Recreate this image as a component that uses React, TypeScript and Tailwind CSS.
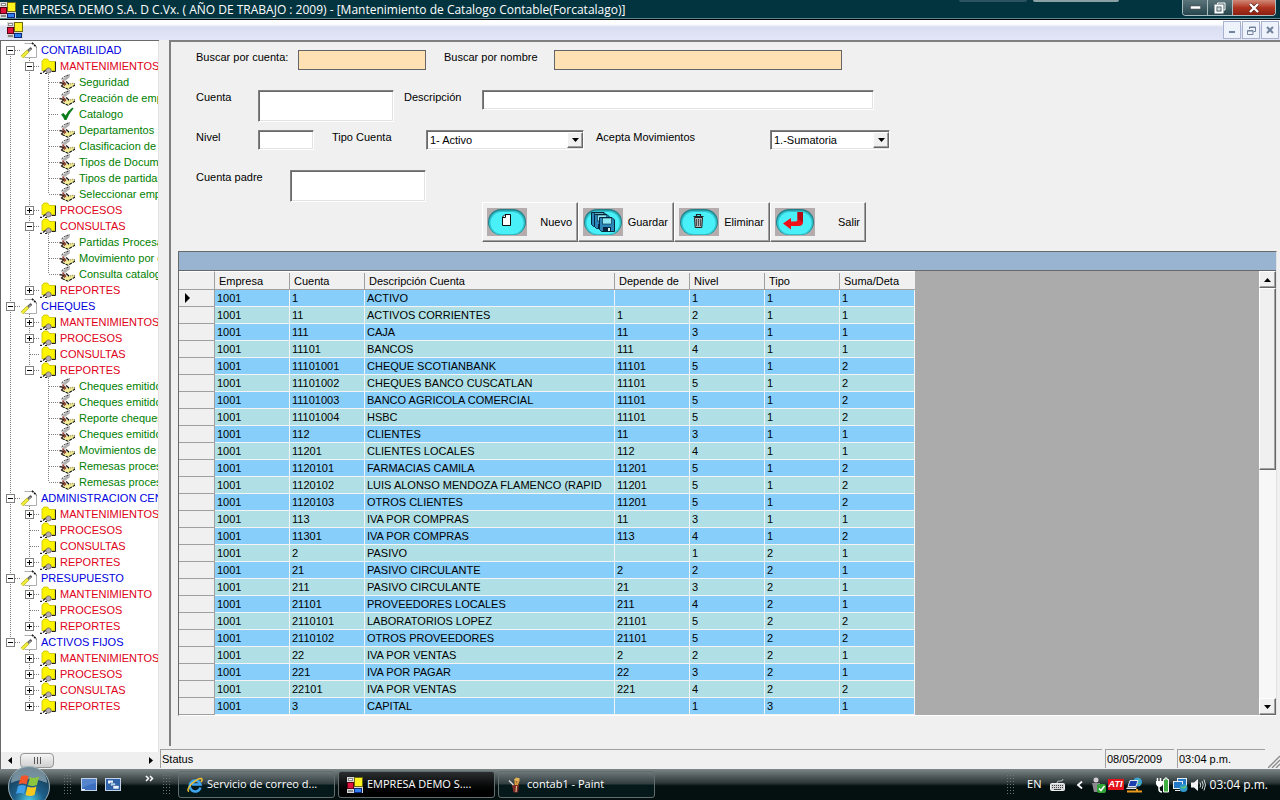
import { useState } from "react";
import type { ReactNode } from "react";

type TreeNode = {
  label: string;
  icon?: "note" | "folder" | "book" | "check";
  expandable?: boolean;
  children?: TreeNode[];
};

const book = (label: string): TreeNode => ({ label, icon: "book" });
const folder = (label: string, expandable = true, children?: TreeNode[]): TreeNode => ({
  label,
  icon: "folder",
  expandable,
  children,
});

const TREE: TreeNode[] = [
  {
    label: "CONTABILIDAD",
    icon: "note",
    expandable: true,
    children: [
      folder("MANTENIMIENTOS", true, [
        book("Seguridad"),
        book("Creación de emp"),
        { label: "Catalogo", icon: "check" },
        book("Departamentos"),
        book("Clasificacion de p"),
        book("Tipos de Docum"),
        book("Tipos de partidas"),
        book("Seleccionar emp"),
      ]),
      folder("PROCESOS"),
      folder("CONSULTAS", true, [
        book("Partidas Procesa"),
        book("Movimiento por c"),
        book("Consulta catalog"),
      ]),
      folder("REPORTES"),
    ],
  },
  {
    label: "CHEQUES",
    icon: "note",
    expandable: true,
    children: [
      folder("MANTENIMIENTOS"),
      folder("PROCESOS"),
      folder("CONSULTAS", false),
      folder("REPORTES", true, [
        book("Cheques emitido"),
        book("Cheques emitido"),
        book("Reporte cheques"),
        book("Cheques emitido"),
        book("Movimientos de l"),
        book("Remesas proces"),
        book("Remesas proces"),
      ]),
    ],
  },
  {
    label: "ADMINISTRACION CEN",
    icon: "note",
    expandable: true,
    children: [
      folder("MANTENIMIENTOS"),
      folder("PROCESOS", false),
      folder("CONSULTAS", false),
      folder("REPORTES"),
    ],
  },
  {
    label: "PRESUPUESTO",
    icon: "note",
    expandable: true,
    children: [folder("MANTENIMIENTO"), folder("PROCESOS", false), folder("REPORTES")],
  },
  {
    label: "ACTIVOS FIJOS",
    icon: "note",
    expandable: true,
    children: [folder("MANTENIMIENTOS"), folder("PROCESOS"), folder("CONSULTAS"), folder("REPORTES")],
  },
];

const COLUMNS = ["Empresa", "Cuenta", "Descripción Cuenta", "Depende de", "Nivel", "Tipo", "Suma/Deta"];

const ROWS: string[][] = [
  ["1001", "1", "ACTIVO", "", "1", "1", "1"],
  ["1001", "11", "ACTIVOS CORRIENTES", "1", "2", "1", "1"],
  ["1001", "111", "CAJA", "11", "3", "1", "1"],
  ["1001", "11101", "BANCOS", "111", "4", "1", "1"],
  ["1001", "11101001", "CHEQUE SCOTIANBANK", "11101", "5", "1", "2"],
  ["1001", "11101002", "CHEQUES BANCO CUSCATLAN", "11101", "5", "1", "2"],
  ["1001", "11101003", "BANCO AGRICOLA COMERCIAL", "11101", "5", "1", "2"],
  ["1001", "11101004", "HSBC", "11101", "5", "1", "2"],
  ["1001", "112", "CLIENTES", "11", "3", "1", "1"],
  ["1001", "11201", "CLIENTES LOCALES", "112", "4", "1", "1"],
  ["1001", "1120101", "FARMACIAS CAMILA", "11201", "5", "1", "2"],
  ["1001", "1120102", "LUIS ALONSO MENDOZA FLAMENCO (RAPID", "11201", "5", "1", "2"],
  ["1001", "1120103", "OTROS CLIENTES", "11201", "5", "1", "2"],
  ["1001", "113", "IVA POR COMPRAS", "11", "3", "1", "1"],
  ["1001", "11301", "IVA POR COMPRAS", "113", "4", "1", "2"],
  ["1001", "2", "PASIVO", "", "1", "2", "1"],
  ["1001", "21", "PASIVO CIRCULANTE", "2", "2", "2", "1"],
  ["1001", "211", "PASIVO CIRCULANTE", "21", "3", "2", "1"],
  ["1001", "21101", "PROVEEDORES LOCALES", "211", "4", "2", "1"],
  ["1001", "2110101", "LABORATORIOS LOPEZ", "21101", "5", "2", "2"],
  ["1001", "2110102", "OTROS PROVEEDORES", "21101", "5", "2", "2"],
  ["1001", "22", "IVA POR VENTAS", "2", "2", "2", "1"],
  ["1001", "221", "IVA POR PAGAR", "22", "3", "2", "1"],
  ["1001", "22101", "IVA POR VENTAS", "221", "4", "2", "2"],
  ["1001", "3", "CAPITAL", "", "1", "3", "1"],
];

const raised =
  "bg-[#f0f0f0] border border-t-white border-l-white border-r-[#696969] border-b-[#696969] shadow-[inset_-1px_-1px_0_#a0a0a0]";
const sunken =
  "bg-white border border-t-[#808080] border-l-[#808080] border-r-white border-b-white shadow-[inset_1px_1px_0_#696969,inset_-1px_-1px_0_#e3e3e3] outline-none";

function FormsIcon() {
  return (
    <svg width="16" height="16" viewBox="0 0 16 16" shapeRendering="crispEdges" className="shrink-0">
      <rect width="16" height="16" fill="#d8d8d8" />
      <rect x="1" y="1" width="5" height="3" fill="#8a8a8a" />
      <rect x="2" y="2" width="3" height="1" fill="#fff" />
      <rect x="0" y="5" width="7" height="7" fill="#5a0014" />
      <rect x="1" y="6" width="5" height="5" fill="#e0123c" />
      <rect x="7" y="0" width="9" height="10" fill="#6e6a10" />
      <rect x="8" y="1" width="7" height="8" fill="#fff21e" />
      <rect x="7" y="11" width="8" height="5" fill="#0a2a7a" />
      <rect x="8" y="12" width="6" height="3" fill="#2f7df0" />
      <rect x="1" y="13" width="5" height="2" fill="#8a8a8a" />
    </svg>
  );
}

function NodeIcon({ icon }: { icon: TreeNode["icon"] }) {
  if (icon === "note") {
    return (
      <svg width="16" height="16" viewBox="0 0 16 16" className="shrink-0">
        <path d="M3.5 1.5H12L15.5 5V15.5H3.5" fill="#fff" stroke="#b0b0b0" />
        <path d="M11 .8L15.5 5.2" stroke="#111" strokeWidth="1.6" strokeDasharray="2 1" />
        <path d="M1 15L7 9" stroke="#b8b020" strokeWidth="3.4" />
        <path d="M1 15L7 9" stroke="#f4f03a" strokeWidth="2.2" />
        <path d="M7 9L10.5 6" stroke="#555" strokeWidth="2.4" />
        <path d="M8 8.6L9.6 7" stroke="#d8d8d8" strokeWidth="1" />
      </svg>
    );
  }
  if (icon === "folder") {
    return (
      <svg width="16" height="16" viewBox="0 0 16 16" className="shrink-0">
        <path d="M2 12.5V3L4 1H7.500L9.500 3.500H15V12.500Z" fill="#fdf500" stroke="#c8bc00" strokeWidth=".8" />
        <path d="M15.500 3.500V13.500H11.500" fill="none" stroke="#222" />
        <path d="M0 15.500H2M3 14.500L6 12" stroke="#222" strokeWidth="1.400" />
        <circle cx="8.500" cy="12.500" r="2.600" fill="#b9aeb2" stroke="#6c6668" strokeWidth=".8" />
        <path d="M5 15.500H7" stroke="#222" />
      </svg>
    );
  }
  if (icon === "check") {
    return (
      <svg width="16" height="16" viewBox="0 0 16 16" className="shrink-0">
        <path d="M2 8.5L4.5 7L6.5 9.5Q9 4.5 13.5 1.5L14.5 2.5Q10 7.5 7.5 14H5.5Q4 10.5 2 8.5Z" fill="#0b7d1d" />
      </svg>
    );
  }
  return (
    <svg width="16" height="16" viewBox="0 0 16 16" className="shrink-0">
      <path d="M5 9.500L9 10L15 9L15.500 11.500L9 15L3.500 12.500Z" fill="#f0eb94" />
      <path d="M3 12.500L9 15.200L15.500 11.500V9" fill="none" stroke="#111" strokeWidth="1.100" strokeDasharray="3 1" />
      <path d="M9 10.500L15 9" stroke="#8a8440" strokeDasharray="1 1" />
      <path d="M3 5.500L8 1.500L11 .5L10.500 3.500L6 7Z" fill="#b2b2b2" />
      <path d="M2.500 5L5.500 2.500L10.500 .5" fill="none" stroke="#222" strokeDasharray="2 1" />
      <path d="M.500 8.500L5 9.500L2 12.500" fill="none" stroke="#3a2420" strokeWidth="1.300" />
      <path d="M3.500 6.500L6.500 10L5 11.500" fill="none" stroke="#8a3c30" strokeWidth="1.500" />
      <path d="M7 7.500L10 10" stroke="#111" strokeWidth="1.200" />
    </svg>
  );
}

// One 19px step of the dotted tree lines
function Guide({ top, bottom, right }: { top?: boolean; bottom?: boolean; right?: boolean }) {
  return (
    <svg width="19" height="16" viewBox="0 0 19 16" shapeRendering="crispEdges" className="block shrink-0">
      <g stroke="#808080" strokeDasharray="1 1">
        {top && <path d="M9.5 0V8" />}
        {bottom && <path d="M9.5 8V16" />}
        {right && <path d="M10 8.5H19" />}
      </g>
    </svg>
  );
}

type BranchProps = {
  node: TreeNode;
  level: number;
  trail: boolean[];
  first: boolean;
  last: boolean;
};

const LABEL_COLORS = ["text-[#0000e0]", "text-[#e00018]", "text-[#008000]"];

function Branch({ node, level, trail, first, last }: BranchProps) {
  const [open, setOpen] = useState(!!node.children);

  return (
    <li>
      <div className="flex h-4 items-center whitespace-nowrap">
        {trail.map((line, i) => (
          <Guide key={i} top={line} bottom={line} />
        ))}
        <div className="relative shrink-0">
          <Guide top={!(level === 0 && first)} bottom={!last} right />
          {node.expandable && (
            <button
              type="button"
              aria-label={node.label}
              aria-expanded={open}
              onClick={() => setOpen(!open)}
              className="absolute top-1 left-[5px] block"
            >
              <svg width="9" height="9" viewBox="0 0 9 9" shapeRendering="crispEdges" className="block">
                <rect x=".5" y=".5" width="8" height="8" fill="#fff" stroke="#808080" />
                <path d="M2 4.5H7" stroke="#000" />
                {!(open && node.children) && <path d="M4.5 2V7" stroke="#000" />}
              </svg>
            </button>
          )}
        </div>
        <span className="ml-px flex items-center gap-1">
          <NodeIcon icon={node.icon} />
          <span className={LABEL_COLORS[level]}>{node.label}</span>
        </span>
      </div>
      {open && node.children && (
        <ul>
          {node.children.map((child, i) => (
            <Branch
              key={i}
              node={child}
              level={level + 1}
              trail={[...trail, !last]}
              first={i === 0}
              last={i === node.children!.length - 1}
            />
          ))}
        </ul>
      )}
    </li>
  );
}

function Arrow({ dir }: { dir: "up" | "down" | "left" | "right" }) {
  const paths = { up: "M0 6H7L3.5 2Z", down: "M0 2H7L3.5 6Z", left: "M5 0V7L1 3.5Z", right: "M2 0V7L6 3.5Z" };
  return (
    <svg width="7" height="8" viewBox="0 0 7 8">
      <path d={paths[dir]} fill="#000" />
    </svg>
  );
}

function Sidebar() {
  return (
    <aside className="flex w-[159px] shrink-0 flex-col border-t border-l border-[#696969] bg-white">
      <ul className="flex-1 overflow-hidden border-r border-[#e3e3e3] pt-px">
        {TREE.map((node, i) => (
          <Branch key={i} node={node} level={0} trail={[]} first={i === 0} last={i === TREE.length - 1} />
        ))}
      </ul>
      <div className="flex h-[17px] shrink-0 items-center bg-[#efefef]">
        <button type="button" aria-label="Izquierda" className="flex w-[19px] justify-center">
          <Arrow dir="left" />
        </button>
        <div className="flex h-[15px] w-[34px] items-center justify-center gap-[2px] rounded-sm border border-[#979797] bg-linear-to-b from-[#f5f5f5] to-[#cfcfcf]">
          <span className="h-[7px] w-px bg-[#555]" />
          <span className="h-[7px] w-px bg-[#555]" />
          <span className="h-[7px] w-px bg-[#555]" />
        </div>
        <button type="button" aria-label="Derecha" className="ml-auto flex w-[17px] justify-center">
          <Arrow dir="right" />
        </button>
      </div>
    </aside>
  );
}

function Select({ id, value, width }: { id: string; value: string; width: string }) {
  return (
    <div className={`relative h-5 ${width}`}>
      <select id={id} defaultValue={value} className={`h-5 w-full appearance-none pl-[3px] ${sunken}`}>
        <option>{value}</option>
      </select>
      <span className={`pointer-events-none absolute top-[2px] right-px flex h-4 w-4 items-center justify-center ${raised}`}>
        <Arrow dir="down" />
      </span>
    </div>
  );
}

function OvalIcon({ children }: { children: ReactNode }) {
  return (
    <svg width="40" height="28" viewBox="0 0 40 28" className="shrink-0">
      <rect width="40" height="28" fill="#b5adad" />
      <rect x="1" y="1" width="38" height="26" rx="13" fill="#22808a" />
      <rect x="2" y="2.500" width="36" height="24.500" rx="12" fill="#2fc0ca" />
      <rect x="3.500" y="4" width="33" height="22" rx="11" fill="#4af0f8" />
      {children}
    </svg>
  );
}

function Floppy({ x, y }: { x: number; y: number }) {
  return (
    <g transform={`translate(${x} ${y})`}>
      <path d="M.5 .5H13L15.5 3V14.5H2.5L.5 12.5Z" fill="#2c87b8" stroke="#06263f" />
      <rect x="3.5" y="1" width="9" height="6" fill="#8fe9f2" stroke="#06263f" strokeWidth=".6" />
      <rect x="4" y="10" width="8" height="4.5" fill="#06263f" />
      <rect x="9" y="11" width="2" height="3" fill="#d8f6fa" />
    </g>
  );
}

function ToolButton({ label, children }: { label: string; children: ReactNode }) {
  return (
    <button type="button" className={`flex h-10 w-24 items-center justify-between pr-[5px] pl-1 ${raised}`}>
      <OvalIcon>{children}</OvalIcon>
      {label}
    </button>
  );
}

function CatalogForm() {
  return (
    <form className="pt-2 pl-[25px] leading-[14px]" onSubmit={(e) => e.preventDefault()}>
      <div className="flex h-10 items-start">
        <label htmlFor="buscar-cuenta" className="w-[102px]">Buscar por cuenta:</label>
        <input id="buscar-cuenta" className="h-5 w-32 border border-[#646464] bg-[#ffe1b3] px-1 outline-none" />
        <label htmlFor="buscar-nombre" className="ml-[18px] w-[110px]">Buscar por nombre</label>
        <input id="buscar-nombre" className="h-5 w-72 border border-[#646464] bg-[#ffe1b3] px-1 outline-none" />
      </div>
      <div className="flex h-10 items-start">
        <label htmlFor="cuenta" className="w-[62px]">Cuenta</label>
        <textarea id="cuenta" className={`h-8 w-[136px] resize-none px-1 ${sunken}`} />
        <label htmlFor="descripcion" className="ml-[10px] w-[78px]">Descripción</label>
        <input id="descripcion" className={`h-5 w-[392px] px-1 ${sunken}`} />
      </div>
      <div className="flex h-10 items-start">
        <label htmlFor="nivel" className="w-[62px]">Nivel</label>
        <input id="nivel" className={`h-5 w-14 px-1 ${sunken}`} />
        <label htmlFor="tipo" className="ml-[18px] w-[94px]">Tipo Cuenta</label>
        <Select id="tipo" value="1- Activo" width="w-[158px]" />
        <label htmlFor="movimientos" className="ml-3 w-[174px]">Acepta Movimientos</label>
        <Select id="movimientos" value="1.-Sumatoria" width="w-[120px]" />
      </div>
      <div className="flex h-8 items-start">
        <label htmlFor="padre" className="w-[94px]">Cuenta padre</label>
        <textarea id="padre" className={`h-8 w-[136px] resize-none px-1 ${sunken}`} />
      </div>
      <div className="flex pl-[286px]">
        <ToolButton label="Nuevo">
          <path d="M18 6.5H23.5V17.5H15.5V9Z" fill="#fff" stroke="#111" />
          <path d="M18.5 6.5V9.5H15.5" fill="none" stroke="#111" />
        </ToolButton>
        <ToolButton label="Guardar">
          <Floppy x={8} y={4} />
          <Floppy x={11} y={6} />
          <Floppy x={16} y={9} />
        </ToolButton>
        <ToolButton label="Eliminar">
          <path d="M14.500 8.500H24.500M17.500 8V6.500H21.500V8" fill="none" stroke="#222" strokeWidth="1.200" />
          <path d="M15.500 9.500H23.500L22.800 19.500H16.200Z" fill="#b4b4b8" stroke="#222" />
          <path d="M17.500 11V18M19.500 11V18M21.500 11V18" stroke="#333" strokeWidth=".8" />
        </ToolButton>
        <ToolButton label="Salir">
          <path d="M22.500 4H28V14Q28 18 23.500 18H16V21.500L8 15.500L16 10V13.500H20.500Q22.500 13.500 22.500 11.500Z" fill="#f01018" />
          <path d="M22.500 4H28V14L22.500 11.500Z" fill="#b50d18" />
        </ToolButton>
      </div>
    </form>
  );
}

function AccountsGrid() {
  return (
    <div className="mt-[9px] mr-[3px] mb-[30px] ml-[7px] flex min-h-0 flex-1 flex-col border border-[#696969] border-r-[#e3e3e3] border-b-white bg-[#ababab]">
      <div className="h-[19px] shrink-0 border-b border-[#696969] bg-[#99b4d1]" />
      <div className="flex min-h-0 flex-1">
        <div className="flex-1 overflow-hidden">
          <table className="w-[736px] table-fixed border-separate border-spacing-0">
            <colgroup>
              <col className="w-9" />
              <col className="w-[75px]" />
              <col className="w-[75px]" />
              <col className="w-[250px]" />
              <col className="w-[75px]" />
              <col className="w-[75px]" />
              <col className="w-[75px]" />
              <col className="w-[75px]" />
            </colgroup>
            <thead>
              <tr className="h-[19px] bg-[#f0f0f0]">
                <th className="border-t border-r border-b border-t-white border-r-[#a0a0a0] border-b-[#a0a0a0] p-0" />
                {COLUMNS.map((name) => (
                  <th
                    key={name}
                    className="group border-t border-b border-t-white border-b-[#a0a0a0] p-0 text-left font-normal"
                  >
                    <span className="block h-4 border-r border-[#a0a0a0] pl-1 leading-4 whitespace-nowrap group-last:border-r-0">
                      {name}
                    </span>
                  </th>
                ))}
              </tr>
            </thead>
            <tbody>
              {ROWS.map((row, i) => (
                <tr key={row[1]} className={i % 2 ? "h-[17px] bg-[#b0e0e6]" : "h-[17px] bg-[#87cefa]"}>
                  <th className="border-r border-b border-[#a0a0a0] bg-[#f0f0f0] p-0">
                    {i === 0 && (
                      <svg width="6" height="10" viewBox="0 0 6 10" className="ml-[6px] block">
                        <path d="M0 0V10L5 5Z" fill="#000" />
                      </svg>
                    )}
                  </th>
                  {row.map((cell, j) => (
                    <td key={j} className="border-r border-b border-[#f4f4f4] p-0 pl-[2px] leading-4 whitespace-nowrap">
                      {cell}
                    </td>
                  ))}
                </tr>
              ))}
            </tbody>
          </table>
        </div>
        <div className="flex w-[17px] shrink-0 flex-col bg-[#f7f7f7]">
          <button type="button" aria-label="Subir" className={`flex h-[17px] items-center justify-center ${raised}`}>
            <Arrow dir="up" />
          </button>
          <div className={`h-[182px] ${raised}`} />
          <button type="button" aria-label="Bajar" className={`mt-auto flex h-[17px] items-center justify-center ${raised}`}>
            <Arrow dir="down" />
          </button>
        </div>
      </div>
    </div>
  );
}

function StatusBar() {
  const panel = "flex items-center border-t border-l border-[#a0a0a0] pl-px";
  return (
    <footer className="flex h-5 shrink-0 gap-[3px] pb-px">
      <div className={`flex-1 ${panel}`}>Status</div>
      <div className={`w-[69px] ${panel}`}>08/05/2009</div>
      <div className={`w-[88px] ${panel}`}>03:04 p.m.</div>
      <svg width="12" height="19" viewBox="0 0 12 19" className="shrink-0">
        <path d="M0 19L12 7M4 19L12 11M8 19L12 15" stroke="#8a8a8a" strokeWidth="1.4" />
      </svg>
    </footer>
  );
}

function TitleBar() {
  return (
    <header className="flex h-[19px] shrink-0 items-start border-b border-[#5d8790] bg-[#02343f] font-['Open_Sans',sans-serif] text-[12px] text-white">
      <div className="flex items-center gap-[6px]">
        <FormsIcon />
        <h1 className="leading-[19px] whitespace-nowrap">
          EMPRESA DEMO S.A. D C.Vx. ( AÑO DE TRABAJO : 2009) - [Mantenimiento de Catalogo Contable(Forcatalago)]
        </h1>
      </div>
      {/* glass reflections */}
      <div className="mr-[63px] ml-auto flex gap-[6px]">
        <span className="h-[2px] w-[68px] rounded-b bg-[#2a5560]" />
        <span className="h-[2px] w-[86px] rounded-b bg-[#8aa2a6]" />
      </div>
      <div className="mr-1 flex h-4 overflow-hidden rounded-b border border-t-0 border-[#a9bcc0]">
        <button type="button" aria-label="Minimizar" className="flex w-[25px] items-center justify-center border-r border-[#a9bcc0] bg-linear-to-b from-[#5b747a] to-[#27464e]">
          <svg width="11" height="5" viewBox="0 0 11 5"><rect x=".5" y="1" width="10" height="3" fill="#fff" stroke="#444" strokeWidth=".5" /></svg>
        </button>
        <button type="button" aria-label="Restaurar" className="flex w-[25px] items-center justify-center border-r border-[#a9bcc0] bg-linear-to-b from-[#5b747a] to-[#27464e]">
          <svg width="12" height="12" viewBox="0 0 12 12" fill="none" stroke="#fff">
            <path d="M3.5 2.5V1H11V8H9.5" />
            <rect x="1.5" y="3.5" width="7" height="7" strokeWidth="2" />
            <rect x="4" y="6" width="2" height="2" />
          </svg>
        </button>
        <button type="button" aria-label="Cerrar" className="flex w-[42px] items-center justify-center bg-linear-to-b from-[#d08878] via-[#b03420] to-[#8c2010]">
          <svg width="12" height="10" viewBox="0 0 12 10">
            <path d="M2 1L10 9M10 1L2 9" stroke="#5a2018" strokeWidth="3.6" />
            <path d="M2 1L10 9M10 1L2 9" stroke="#fff" strokeWidth="2.4" />
          </svg>
        </button>
      </div>
    </header>
  );
}

function MenuStrip() {
  const button = "flex h-[18px] w-[18px] items-center justify-center border border-[#a8b2cc] bg-[#edf2fb]";
  return (
    <div className="flex h-[21px] shrink-0 items-center justify-between border-t border-black bg-linear-to-b from-white from-20% via-[#d9def0] via-35% to-[#e3e6f8] pr-px pl-[7px]">
      <FormsIcon />
      <div className="flex gap-px">
        <button type="button" aria-label="Minimizar documento" className={button}>
          <svg width="8" height="8" viewBox="0 0 8 8"><rect x="1" y="5" width="6" height="2" fill="#71829c" /></svg>
        </button>
        <button type="button" aria-label="Restaurar documento" className={button}>
          <svg width="9" height="9" viewBox="0 0 9 9" fill="none" stroke="#71829c">
            <path d="M2.5 3V1H8.5V5.5H6.5M2.5 1.5H8.5" />
            <path d="M.5 4.5H6V8.5H.5ZM.5 5H6" />
          </svg>
        </button>
        <button type="button" aria-label="Cerrar documento" className={button}>
          <svg width="8" height="8" viewBox="0 0 8 8"><path d="M1 1L7 7M7 1L1 7" stroke="#71829c" strokeWidth="2" /></svg>
        </button>
      </div>
    </div>
  );
}

function Grip() {
  return (
    <svg width="9" height="20" viewBox="0 0 9 20" shapeRendering="crispEdges" className="shrink-0">
      {[0, 3, 6].map((x) => (
        <path key={x} d={`M${x + 0.5} 0V20`} stroke="#6d7577" strokeDasharray="1 2" />
      ))}
    </svg>
  );
}

function TaskButton({ label, active, children }: { label: string; active?: boolean; children: ReactNode }) {
  return (
    <button
      type="button"
      className={`flex h-[27px] w-[157px] items-center gap-1 rounded-[3px] border border-[#626d70] pl-2 whitespace-nowrap ${
        active
          ? "bg-linear-to-b from-[#2c2f31] to-black"
          : "bg-linear-to-b from-[#6d7779] from-0% via-[#323d3f] via-48% to-[#05191b] to-52%"
      }`}
    >
      {children}
      {label}
    </button>
  );
}

function Taskbar() {
  return (
    <nav className="flex h-[31px] shrink-0 items-center bg-linear-to-b from-[#7d8788] from-0% via-[#2d3738] via-45% to-[#04100f] to-55% font-['Open_Sans',sans-serif] text-[11px] text-white">
      <button type="button" aria-label="Inicio" className="ml-2 h-[31px] w-[42px] shrink-0">
        <svg width="42" height="34" viewBox="0 0 42 34" className="relative -mt-[3px] block">
          <defs>
            <radialGradient id="orb" cx=".5" cy=".85" r=".8">
              <stop offset="0" stopColor="#4fd0e8" />
              <stop offset=".45" stopColor="#1d5f8a" />
              <stop offset="1" stopColor="#17364c" />
            </radialGradient>
          </defs>
          <circle cx="21" cy="21" r="20.5" fill="url(#orb)" stroke="#9fb2ba" />
          <path d="M3 17A18 17 0 0 1 39 17Q21 9 3 17Z" fill="#a6b8c0" opacity=".65" />
          <path d="M13 10.5Q17 8 20.5 10.5L18.5 18.5Q15 16.5 10.5 18.5Z" fill="#f0562a" />
          <path d="M22 11Q26 13 31 10.5L29 19Q24.500 21 20 19Z" fill="#8cc63e" />
          <path d="M10 20Q14.500 18 18 20L16 28Q12 26 8 28Z" fill="#3f9fe8" />
          <path d="M19.500 20.500Q24 22.500 28.500 20.500L26.500 29Q22 31 17.500 29Z" fill="#fbc81e" />
        </svg>
      </button>
      <div className="ml-[14px] flex items-center">
        <Grip />
        <svg width="16" height="14" viewBox="0 0 16 14" className="ml-2">
          <rect x=".5" y=".5" width="15" height="12" fill="#3c6fc0" stroke="#c3d2e6" />
          <path d="M1 1H15V5Q8 6 1 10Z" fill="#5585cc" />
          <path d="M1 11.500H4" stroke="#fff" />
        </svg>
        <svg width="16" height="14" viewBox="0 0 16 14" className="ml-2">
          <rect x=".5" y=".5" width="15" height="12" fill="#2f62a8" stroke="#c3d2e6" />
          <rect x="3" y="2.500" width="5" height="3" fill="#e8f1fb" />
          <rect x="5.500" y="5" width="5" height="3" fill="#b6d0ef" stroke="#244f8a" strokeWidth=".5" />
          <rect x="8" y="7.500" width="6" height="3.500" fill="#e8f1fb" stroke="#244f8a" strokeWidth=".5" />
        </svg>
        <svg width="9" height="7" viewBox="0 0 9 7" className="mr-[9px] mb-3 ml-6">
          <path d="M1 1L3.500 3.500L1 6M5 1L7.500 3.500L5 6" fill="none" stroke="#fff" strokeWidth="1.500" />
        </svg>
        <Grip />
      </div>
      <div className="ml-[6px] flex gap-[3px]">
        <TaskButton label="Servicio de correo d...">
          <svg width="16" height="16" viewBox="0 0 16 16" className="shrink-0">
            <path d="M13.500 10.500A5.500 5.500 0 1 1 13.500 7.500H5" fill="none" stroke="#3fa5ee" strokeWidth="2.600" />
            <path d="M2 14.500Q-1 13 4.500 7Q11 1 14.500 1.500Q16 2.500 14 5" fill="none" stroke="#f3c331" strokeWidth="1.400" />
          </svg>
        </TaskButton>
        <TaskButton label="EMPRESA DEMO S...." active>
          <FormsIcon />
        </TaskButton>
        <TaskButton label="contab1 - Paint">
          <svg width="16" height="16" viewBox="0 0 16 16" className="shrink-0">
            <path d="M5 8H12L11 15.500H6.500Z" fill="#7c2a22" />
            <path d="M8.500 8V2M10 8L12 2.500" stroke="#d89a3c" strokeWidth="2" />
            <path d="M7 3L9 .5L13 1.500L11 4.500Z" fill="#e7b45c" />
            <path d="M6.500 8L2 3.500" stroke="#d9d9d9" strokeWidth="1.500" />
            <path d="M9.500 9L9 15" stroke="#e2c9a0" />
          </svg>
        </TaskButton>
      </div>
      <div className="mr-3 ml-auto flex items-center">
        <Grip />
        <span className="ml-[11px]">EN</span>
        <svg width="15" height="12" viewBox="0 0 15 12" className="ml-2">
          <path d="M7 4Q7 1.500 10 2T13 0" fill="none" stroke="#b9bfc0" />
          <rect x=".5" y="4.500" width="14" height="7" rx="1" fill="#cfd3d4" stroke="#eee" />
          <path d="M2 6.500H13M2 8.500H13" stroke="#444" strokeDasharray="1 1" />
          <path d="M4 10.500H11" stroke="#444" />
        </svg>
        <svg width="7" height="8" viewBox="0 0 7 8" className="ml-[11px]">
          <path d="M6 .5L2 4L6 7.500" fill="none" stroke="#fff" strokeWidth="1.800" />
        </svg>
        <svg width="15" height="16" viewBox="0 0 15 16" className="ml-2">
          <circle cx="5" cy="3" r="2.500" fill="#d6d0d6" />
          <path d="M1 6H9V10L6 15H3Z" fill="#8d8890" />
          <rect x="6" y="7" width="9" height="9" rx="2" fill="#2fa336" />
          <path d="M8 11.500L10 13.500L13.500 9" fill="none" stroke="#fff" strokeWidth="1.500" />
        </svg>
        <span className="ml-[2px] flex h-[11px] w-4 items-center justify-center bg-[#e5131b] font-['Liberation_Sans',sans-serif] text-[9px] leading-[11px] font-bold italic">
          ATI
        </span>
        <svg width="17" height="16" viewBox="0 0 17 16" className="ml-[2px]">
          <circle cx="11.500" cy="5" r="4.500" fill="#3aa0d8" />
          <path d="M9 3Q12 5 14 2M9 7Q12 5 15 7" stroke="#5ec26a" fill="none" />
          <path d="M4 3.500H12L10 9.500H2Z" fill="#1c3fb0" stroke="#dfe6ee" />
          <path d="M1 10.500H11L10 12H0Z" fill="#dfe6ee" />
          <path d="M1 14.500H16M11 12V15" stroke="#e99a1c" strokeWidth="2" />
        </svg>
        <svg width="14" height="16" viewBox="0 0 14 16" className="ml-3">
          <path d="M2.500 1V4M5.500 1V4M4 9V12Q4 15 7 15" stroke="#fff" strokeWidth="1.500" fill="none" />
          <path d="M1 4H8V7Q7 10 4.500 10T1 7Z" fill="#fff" />
          <path d="M8.500 2.500H10V1H12V2.500H13.500V15H8.500Z" fill="#3fae43" stroke="#fff" />
        </svg>
        <svg width="15" height="16" viewBox="0 0 15 16" className="ml-1">
          <rect x="4.500" y="1.500" width="9" height="7" fill="#2378c8" stroke="#e6edf3" />
          <rect x=".5" y="4.500" width="9" height="7" fill="#2378c8" stroke="#e6edf3" />
          <path d="M2 13.500H7" stroke="#e6edf3" />
          <circle cx="10.500" cy="11" r="4" fill="#2f9ad0" />
          <path d="M8 10Q11 12 13 9" stroke="#62c86c" strokeWidth="1.500" fill="none" />
        </svg>
        <svg width="15" height="14" viewBox="0 0 15 14" className="ml-[3px]">
          <path d="M0 4.500H3L7 1V13L3 9.500H0Z" fill="#f3f3f3" />
          <path d="M9 4.500Q10.500 7 9 9.500M11 3Q13.500 7 11 11M13 1.500Q16 7 13 12.500" fill="none" stroke="#cfd8d4" />
        </svg>
        <time className="ml-1 text-[12px]">03:04 p.m.</time>
      </div>
    </nav>
  );
}

export default function App() {
  return (
    <div className="flex min-h-screen flex-col bg-[#f0f0f0] font-['Liberation_Sans',Arial,sans-serif] text-[11px] text-black">
      <TitleBar />
      <MenuStrip />
      <div className="flex flex-1">
        <Sidebar />
        <div className="flex min-w-0 flex-1 flex-col pl-px">
          <main className="mb-[3px] ml-[9px] flex flex-1 flex-col border-t-2 border-l-2 border-[#808080]">
            <CatalogForm />
            <AccountsGrid />
          </main>
          <StatusBar />
        </div>
      </div>
      <Taskbar />
    </div>
  );
}
